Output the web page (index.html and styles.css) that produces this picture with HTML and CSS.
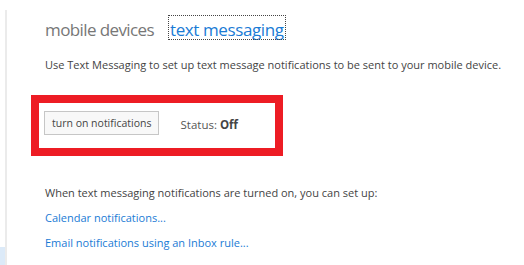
FILE: index.html
```html
<!DOCTYPE html>
<html>

<head>
  <meta charset="UTF-8">
  <title>text messaging</title>
  <link rel="stylesheet" href="styles.css">
</head>

<body>
  <div class="page">
    <div class="sidebar">
      <div class="nav-selected"></div>
    </div>
    <div class="content">
      <div class="tabs">
        <span class="tab">mobile devices</span>
        <a class="tab tab-active" href="#">text messaging</a>
      </div>
      <p class="description">Use Text Messaging to set up text message notifications to be sent to your mobile device.</p>
      <div class="highlight">
        <button class="btn">turn on notifications</button>
        <span class="status">Status: <b>Off</b></span>
      </div>
      <p class="info">When text messaging notifications are turned on, you can set up:</p>
      <a class="link" href="#">Calendar notifications...</a>
      <a class="link" href="#">Email notifications using an Inbox rule...</a>
    </div>
  </div>
</body>

</html>
```

FILE: styles.css
```css
/* 页面整体 */
body {
  margin: 0;
  background: #fff;
  font-family: "Open Sans", "Noto Sans", sans-serif;
  color: #444;
}

.page {
  display: flex;
  height: 265px;
}

/* 左侧导航条 */
.sidebar {
  width: 5px;
  display: flex;
  flex-direction: column;
  justify-content: flex-end;
}

.nav-selected {
  height: 18px;
  background: #dceaf8;
}

.content {
  flex: 1;
  margin-top: 10px;
  border-left: 2px solid #ebebeb;
  padding: 6px 0 0 38px;
}

/* 标签 */
.tabs {
  display: flex;
  align-items: flex-start;
  gap: 15px;
  font-size: 17px;
  line-height: 19px;
  letter-spacing: -0.6px;
}

.tab {
  color: #777;
  padding-top: 4px;
}

.tab-active {
  color: #1a7bd5;
  text-decoration: none;
  letter-spacing: -0.4px;
  outline: 1px dotted #444;
  padding: 4px 1px 0;
}

/* 说明文字 */
.description {
  margin: 18px 0 0;
  font-size: 11px;
  line-height: 16px;
  color: #444;
}

/* 红框 */
.highlight {
  display: flex;
  align-items: center;
  gap: 21px;
  width: 231px;
  margin: 22px 0 0 -14px;
  padding: 8px 0 13px 5px;
  border: 8px solid #ed1c24;
}

.btn {
  height: 24px;
  padding: 0 7px;
  font-family: inherit;
  font-size: 10.5px;
  color: #444;
  background: #f8f8f8;
  border: 1px solid #c6c6c6;
  border-radius: 0;
}

.status {
  font-size: 11.5px;
  color: #555;
  margin-top: 2px;
}

.status b {
  color: #444;
}

.info {
  margin: 29px 0 0;
  font-size: 11px;
  line-height: 16px;
}

.link {
  display: block;
  margin-top: 9px;
  font-size: 11px;
  line-height: 16px;
  color: #1a7bd5;
  text-decoration: none;
}
```
